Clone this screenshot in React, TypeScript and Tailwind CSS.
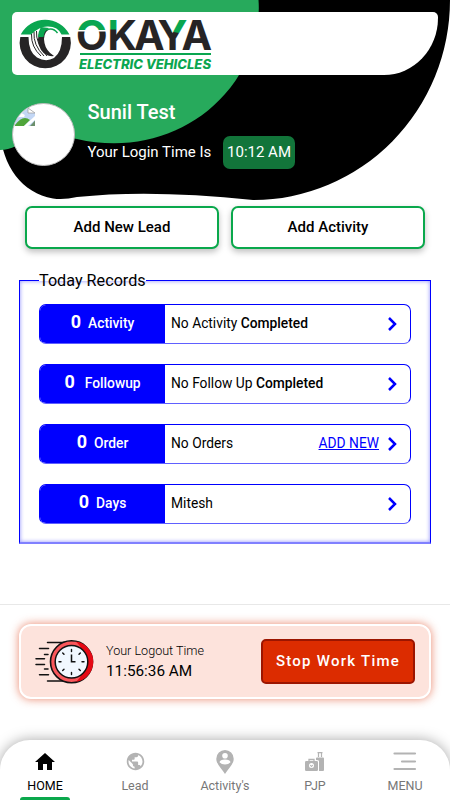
import { ReactElement } from 'react';
import { MdHome, MdPublic } from 'react-icons/md';

type RecordItem = {
  label: string;
  gap: string;
  text: string;
  bold?: string;
  link?: string;
};

const records: RecordItem[] = [
  { label: 'Activity', gap: 'gap-x-[7px]', text: 'No Activity', bold: 'Completed' },
  { label: 'Followup', gap: 'gap-x-[10px]', text: 'No Follow Up', bold: 'Completed' },
  { label: 'Order', gap: 'gap-x-[7px]', text: 'No Orders', link: 'ADD NEW' },
  { label: 'Days', gap: 'gap-x-[7px]', text: 'Mitesh' },
];

function Logo() {
  return (
    <svg width="200" height="63" viewBox="12 12 200 63" className="overflow-visible">
      <defs>
        <pattern id="wordmark" patternUnits="userSpaceOnUse" x="0" y="0" width="230" height="80">
          <rect width="230" height="80" fill="#262425" />
          <rect x="76" y="12" width="32.5" height="18.500" fill="#0aa650" />
          <rect x="76" y="30" width="32.5" height="1.500" fill="#fff" />
          <rect x="108.500" y="12" width="9" height="17.500" fill="#0aa650" />
          <path d="M171 31.500 L176 18 H190 L179 33 Z" fill="#0aa650" />
        </pattern>
      </defs>
      <path d="M20.700 34.500 A27.500 27.500 0 0 1 69.500 34.500 H61.500 Q58 26.500 48 26.500 Q40 26 31 34.500 Z" fill="#0aa650" />
      <path
        d="M20.300 37 H28.500 Q28.500 52 37 57.500 Q46 62.500 54 58 Q62 52 62 37 H70.200 A25.600 25.600 0 1 1 20.300 37 Z"
        fill="#262425"
      />
      <path d="M41 28 Q35 40 41 50 Q46 57 54 56 Q46 51 44.500 43 Q42.500 34 49 29 Z" fill="#262425" />
      <path d="M41 27 Q38 32 38 37 H43.500 Q44 31 49 28 Z" fill="#0aa650" />
      <g fill="none" stroke="#262425" strokeWidth="1">
        <path d="M31.500 34 Q31 47 41 56" />
        <path d="M34 32 Q33 45 44 56" />
        <path d="M36.500 31 Q35.500 43 47 56" />
      </g>
      <path d="M46.500 30 Q53 27 57.500 33" fill="none" stroke="#0aa650" strokeWidth="1.500" />
      <text
        x="76 107.5 134 157.5 181.500"
        y="50"
        fontFamily="Inter, sans-serif"
        fontWeight="700"
        fontSize="41"
        fill="url(#wordmark)"
      >
        OKAYA
      </text>
      <rect x="80" y="53" width="131" height="2" fill="#0aa650" />
      <text
        x="79"
        y="68.500"
        fontFamily="Inter, sans-serif"
        fontWeight="800"
        fontStyle="italic"
        fontSize="12.600"
        textLength="132"
        lengthAdjust="spacingAndGlyphs"
        fill="#0aa650"
      >
        ELECTRIC VEHICLES
      </text>
    </svg>
  );
}

function BrokenImage() {
  return (
    <svg width="20" height="18" viewBox="0 0 20 18">
      <path d="M0 0 H13 L20 5 V18 H0 Z" fill="#c3d7f5" />
      <path d="M13 0 V5 H20 Z" fill="#fff" stroke="#999" strokeWidth=".7" />
      <path d="M2 7 Q5 3 8 6 Q11 7 9 9 H2 Z" fill="#fff" />
      <path d="M0 17 Q8 6 15 12 L9 18 H0 Z" fill="#4fa53a" />
      <path d="M20 8 L9 18 H13 L20 12 Z" fill="#fff" />
      <path d="M20 12.500 L15 18 H20 Z" fill="#6b8f6b" />
    </svg>
  );
}

function ClockIcon() {
  return (
    <svg width="60" height="46" viewBox="34 639 60 46" className="shrink-0">
      <g stroke="#111" strokeWidth="1.500" strokeLinecap="round" fill="none">
        <path d="M47.500 642.500 H66 M39.500 648.500 H48.500 M44.500 654.500 H48 M36 658.800 H44.500 M36 664.500 H44.500 M44.500 669 H48 M39.500 674.800 H48.500 M47.500 681 H66" />
      </g>
      <circle cx="71.500" cy="661.800" r="21" fill="#f9575b" stroke="#111" strokeWidth="1.600" />
      <path d="M76 641.500 A20.500 20.500 0 0 1 76 682 A28 28 0 0 0 76 641.500 Z" fill="#e50914" />
      <circle cx="71.500" cy="661.800" r="16.300" fill="#f1f8ff" stroke="#111" strokeWidth="1.500" />
      <path
        d="M71.500 649.500 V651.500 M71.500 672.500 V674.500 M59 661.800 H61 M82 661.800 H84 M62.700 653 L64 654.300 M79 654.300 L80.300 653 M62.700 670.600 L64 669.300 M79 669.300 L80.300 670.600"
        stroke="#111"
        strokeWidth="1.400"
        strokeLinecap="round"
      />
      <path d="M71.500 654.500 V661.800 H75.500" fill="none" stroke="#111" strokeWidth="1.500" />
    </svg>
  );
}

function PinIcon() {
  return (
    <svg width="18" height="24" viewBox="0 0 18 24">
      <path
        d="M9 0 A8.700 8.700 0 0 1 17.700 8.700 C17.700 14.500 12 19 9 24 C6 19 .3 14.500 .3 8.700 A8.700 8.700 0 0 1 9 0 Z"
        fill="#b3b3b3"
      />
      <circle cx="9" cy="5.700" r="2.800" fill="#fff" />
      <path d="M3.500 12.300 Q4 9.500 9 9.500 Q14 9.500 14.500 12.300 Q12.500 14.500 9 14.500 Q5.500 14.500 3.500 12.300 Z" fill="#fff" />
    </svg>
  );
}

function LuggageIcon() {
  return (
    <svg width="20" height="20" viewBox="0 0 20 20">
      <path d="M12.500 .7 H17.500 M13.500 .7 V5 M16.500 .7 V5" stroke="#b3b3b3" strokeWidth="1.200" fill="none" />
      <path d="M11 6 Q11 5.500 12 5.500 H18 Q19 5.500 19 6.500 V18 Q19 19 18 19 H14 V9 Q14 8 11 8 Z" fill="#b3b3b3" />
      <path d="M4 9 V7.500 H9 V9" stroke="#b3b3b3" strokeWidth="1.300" fill="none" />
      <rect x="0" y="9" width="13" height="10" rx="1.200" fill="#b3b3b3" />
      <circle cx="6.500" cy="13.500" r="2.500" fill="#fff" />
      <path d="M5.200 13 L6.500 14.500 L7.800 13" stroke="#b3b3b3" strokeWidth="1.100" fill="none" />
    </svg>
  );
}

function MenuIcon() {
  return (
    <svg width="24" height="19" viewBox="0 0 24 19" stroke="#b3b3b3" strokeWidth="2.200" strokeLinecap="round">
      <path d="M1.500 1.500 H22 M9 9.500 H22 M1.500 17 H22" />
    </svg>
  );
}

const tabs: { label: string; icon: ReactElement; active?: boolean }[] = [
  { label: 'HOME', icon: <MdHome className="size-[24px]" />, active: true },
  { label: 'Lead', icon: <MdPublic className="size-[21px] text-[#b3b3b3]" /> },
  { label: "Activity's", icon: <PinIcon /> },
  { label: 'PJP', icon: <LuggageIcon /> },
  { label: 'MENU', icon: <MenuIcon /> },
];

export default function App() {
  return (
    <main className="flex h-[800px] w-[450px] flex-col overflow-hidden bg-white font-[Roboto,sans-serif] text-black">
      <header className="relative h-[200px] shrink-0 px-3 pt-3">
        <svg className="absolute top-0 left-0" width="450" height="200" viewBox="0 0 450 200">
          <path d="M0 0 H450 A197 200 0 0 1 253 200 Q150 189 77 197 Q64 200 53 198.500 C22 193 2 166 0 130 Z" fill="#000" />
          <path
            d="M0 0 H258.500 C261 33 248 68 225 94 C189 135 133 152 77 139 C45 132 32 138 16 146 Q8 150 0 150 Z"
            fill="#27aa5c"
          />
        </svg>
        <div className="relative h-[63px] w-[426px] rounded-[5px] rounded-br-[54px_57px] bg-white">
          <Logo />
        </div>
        <div className="relative mt-[23px] flex">
          <div className="mt-[5px] size-[63px] overflow-hidden rounded-full border border-[#bbb] bg-white pt-1 pl-0.5">
            <BrokenImage />
          </div>
          <div className="ml-[12.500px]">
            <h1 className="h-[28px] text-[20px] leading-[28px] font-medium text-white">Sunil Test</h1>
            <div className="mt-[10px] flex items-center">
              <span className="w-[124px] text-[15px] whitespace-nowrap text-white">Your Login Time Is</span>
              <span className="ml-[11.500px] flex h-[33px] w-[72px] items-center justify-center rounded-[7px] bg-[#12753a] text-[15px] text-white">
                10:12 AM
              </span>
            </div>
          </div>
        </div>
      </header>

      <div className="mt-[6px] flex gap-x-3 px-[25px]">
        <button className="h-[43px] flex-1 rounded-[7px] border-2 border-[#0aa84c] bg-white text-[15px] font-medium shadow-[0_3px_6px_rgba(0,0,0,0.25)]">
          Add New Lead
        </button>
        <button className="h-[43px] flex-1 rounded-[7px] border-2 border-[#0aa84c] bg-white text-[15px] font-medium shadow-[0_3px_6px_rgba(0,0,0,0.25)]">
          Add Activity
        </button>
      </div>

      <fieldset className="mx-[19px] mt-[20px] h-[275px] border border-b-2 border-[#00f] border-b-[#8080ff] px-[19px] shadow-[inset_0_0_4px_rgba(0,0,255,0.45)]">
        <legend className="h-[23px] text-[16.200px] leading-[24px]">Today Records</legend>
        <ul className="mt-[12px] flex flex-col gap-y-5">
          {records.map((item) => (
            <li
              key={item.label}
              className="flex h-[40px] items-center overflow-hidden rounded-[7px] border-[1.500px] border-[#00f] border-b-[#6060ff] text-[13.800px]"
            >
              <div
                className={`flex h-[40px] w-[125px] items-baseline justify-center bg-[#00f] pt-[3px] font-medium text-white ${item.gap}`}
              >
                <span className="text-[18px] leading-[30px] font-bold">0</span>
                <span>{item.label}</span>
              </div>
              <p className="ml-[6px] flex-1 pb-[2px]">
                {item.text} {item.bold && <b className="font-medium">{item.bold}</b>}
              </p>
              {item.link && <a className="mr-[9px] pb-[2px] text-[#00f] underline">{item.link}</a>}
              <svg width="9" height="14" viewBox="0 0 9 14" className="mr-[13px]">
                <path d="M1 1 L7 7 L1 13" fill="none" stroke="#00f" strokeWidth="2.500" />
              </svg>
            </li>
          ))}
        </ul>
      </fieldset>

      <section className="mt-[60px] h-[136px] border-t border-[#e8e8e8] px-[19px] pt-[19px]">
        <div className="flex h-[75px] items-center rounded-[12px] border-2 border-white bg-[#fde3dc] pr-[14px] pl-[13px] shadow-[0_0_10px_rgba(222,70,30,0.65)]">
          <ClockIcon />
          <div className="ml-[12px] flex-1 pb-[2px]">
            <p className="text-[12.600px] leading-[20px] font-light">Your Logout Time</p>
            <p className="text-[15.300px] leading-[20px]">11:56:36 AM</p>
          </div>
          <button className="h-[45px] w-[154px] rounded-[5px] border-2 border-[#9c1500] bg-[#dc2c00] text-[15px] font-medium tracking-[1.250px] text-white">
            Stop Work Time
          </button>
        </div>
      </section>

      <nav className="flex h-[60px] shrink-0 rounded-t-[30px] bg-white shadow-[0_0_14px_rgba(0,0,0,0.35)]">
        {tabs.map((tab) => (
          <a key={tab.label} className="flex w-[90px] flex-col items-center pt-[8px]">
            <span className="flex h-[27px] items-center">{tab.icon}</span>
            <span className={`mt-px text-[12.500px] leading-[20px] ${tab.active ? 'text-black' : 'text-[#777]'}`}>
              {tab.label}
            </span>
            {tab.active && <span className="mt-px h-[3px] w-[50px] rounded-t bg-[#0aa84c]" />}
          </a>
        ))}
      </nav>
    </main>
  );
}
